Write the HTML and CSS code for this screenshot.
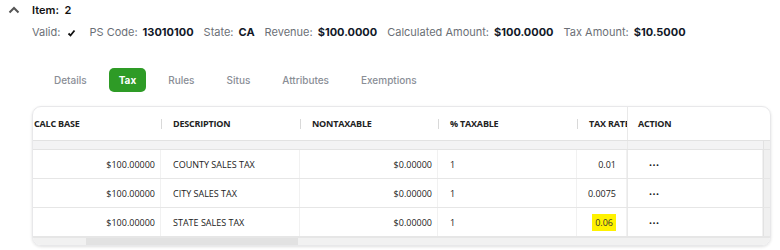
FILE: index.html
```html
<!DOCTYPE html>
<html lang="en">
    <head>
        <meta charset="UTF-8">
        <title>Item 2 - Tax</title>
        <link rel="stylesheet" href="styles.css">
    </head>
    <body>
        <div class="item">
            <div class="item-head">
                <svg class="chevron" width="12" height="8" viewBox="0 0 12 8">
                    <path d="M1.5 6.5 L6 2 L10.5 6.5" fill="none" stroke="#555" stroke-width="2"/>
                </svg>
                <span class="item-title">Item:&nbsp; 2</span>
            </div>

            <div class="summary">
                <span class="label">Valid:</span>
                <svg class="check" width="9" height="8" viewBox="0 0 9 8">
                    <path d="M1.5 4.5 L3.5 6.5 L7.5 1.5" fill="none" stroke="#111" stroke-width="1.8"/>
                </svg>
                <span class="label">PS Code:</span><span class="value">13010100</span>
                <span class="label">State:</span><span class="value">CA</span>
                <span class="label">Revenue:</span><span class="value">$100.0000</span>
                <span class="label">Calculated Amount:</span><span class="value">$100.0000</span>
                <span class="label">Tax Amount:</span><span class="value">$10.5000</span>
            </div>

            <div class="tabs">
                <a class="tab">Details</a>
                <a class="tab active">Tax</a>
                <a class="tab">Rules</a>
                <a class="tab">Situs</a>
                <a class="tab">Attributes</a>
                <a class="tab">Exemptions</a>
            </div>

            <div class="grid">
                <div class="row head">
                    <div class="cell">CALC BASE</div>
                    <div class="cell sep">DESCRIPTION</div>
                    <div class="cell sep">NONTAXABLE</div>
                    <div class="cell sep">% TAXABLE</div>
                    <div class="cell sep clip">TAX RATE</div>
                    <div class="cell pinned">ACTION</div>
                    <div class="cell"></div>
                </div>
                <div class="row band">
                    <div class="cell"></div>
                    <div class="cell"></div>
                    <div class="cell"></div>
                    <div class="cell"></div>
                    <div class="cell"></div>
                    <div class="cell pinned"></div>
                    <div class="cell track top"></div>
                </div>
                <div class="row">
                    <div class="cell num">$100.00000</div>
                    <div class="cell">COUNTY SALES TAX</div>
                    <div class="cell num">$0.00000</div>
                    <div class="cell">1</div>
                    <div class="cell num rate">0.01</div>
                    <div class="cell pinned dots">&bull;&bull;&bull;</div>
                    <div class="cell track"></div>
                </div>
                <div class="row">
                    <div class="cell num">$100.00000</div>
                    <div class="cell">CITY SALES TAX</div>
                    <div class="cell num">$0.00000</div>
                    <div class="cell">1</div>
                    <div class="cell num rate">0.0075</div>
                    <div class="cell pinned dots">&bull;&bull;&bull;</div>
                    <div class="cell track"></div>
                </div>
                <div class="row">
                    <div class="cell num">$100.00000</div>
                    <div class="cell">STATE SALES TAX</div>
                    <div class="cell num">$0.00000</div>
                    <div class="cell">1</div>
                    <div class="cell num rate"><mark>0.06</mark></div>
                    <div class="cell pinned dots">&bull;&bull;&bull;</div>
                    <div class="cell track"></div>
                </div>
                <div class="hscroll">
                    <div class="thumb"></div>
                </div>
            </div>
        </div>
    </body>
</html>
```

FILE: styles.css
```css
* {
    margin: 0;
    padding: 0;
    box-sizing: border-box;
}

body {
    background-color: #fff;
    font-family: 'Inter', 'Liberation Sans', sans-serif;
    color: #111827;
    width: 780px;
    height: 250px;
    overflow: hidden;
}

.item {
    padding: 2px 0 0 0;
}

.item-head {
    display: flex;
    align-items: center;
    height: 15px;
}

.chevron {
    margin-left: 8px;
    margin-right: 12px;
}

.item-title {
    font-size: 11px;
    font-weight: 600;
    color: #111;
}

.summary {
    display: flex;
    align-items: center;
    height: 16px;
    margin-top: 7px;
    padding-left: 32px;
    font-size: 11px;
}

.summary .label {
    color: #6b6f76;
    margin-right: 5px;
}

.summary .value {
    font-weight: 700;
    color: #111827;
    margin-right: 10px;
}

.check {
    margin: 1px 13px 0 2px;
}

.tabs {
    display: flex;
    gap: 12px;
    margin-top: 28px;
    padding-left: 44px;
    height: 24px;
}

.tab {
    display: flex;
    align-items: center;
    padding: 0 10px;
    font-size: 10px;
    font-weight: 500;
    color: #8a8e96;
    border-radius: 5px;
}

.tab.active {
    background-color: #2e9b26;
    color: #fff;
    font-weight: 700;
}

.grid {
    margin: 14px 0 0 32px;
    width: 739px;
    height: 140px;
    border: 1px solid #e8e8ea;
    border-radius: 9px;
    overflow: hidden;
    box-shadow: 0 1px 3px rgba(0, 0, 0, 0.12);
    font-family: 'Open Sans', 'Noto Sans', sans-serif;
    font-size: 9px;
    color: #222;
}

.row {
    display: grid;
    grid-template-columns: 128px 139px 138px 139px 50px 136px 1fr;
    height: 29px;
    border-bottom: 1px solid #e6e6e6;
}

.cell {
    display: flex;
    align-items: center;
    padding: 0 12px;
    white-space: nowrap;
    overflow: hidden;
    border-right: 1px solid #f1f1f1;
}

.row.head {
    height: 34px;
    font-weight: 700;
    letter-spacing: -0.2px;
    color: #222;
    border-bottom: 1px solid #e2e2e2;
}

.row.head .cell {
    border-right: none;
    position: relative;
}

.row.head .cell:first-child {
    padding-left: 1px;
}

.row.head .sep::before {
    content: '';
    position: absolute;
    left: 0;
    top: 12px;
    height: 10px;
    width: 1px;
    background-color: #d9d9d9;
}

.row.head .clip {
    padding-right: 0;
    text-overflow: clip;
}

.row.band {
    height: 9px;
    background-color: #f3f3f4;
    border-bottom: 1px solid #e3e3e3;
}

.row.band .cell {
    border-right: none;
}

.num {
    justify-content: flex-end;
    padding-right: 5px;
}

.num.rate {
    padding-right: 10px;
}

.pinned {
    border-left: 1px solid #e9e9e9;
}

.row.head .pinned {
    border-left: 1px solid #e9e9e9;
    padding-left: 10px;
}

.dots {
    padding-left: 21px;
    font-size: 8px;
    letter-spacing: 0.5px;
}

.track {
    background-color: #f0f0f0;
    border-left: 1px solid #e2e2e2;
    border-right: none;
}

mark {
    background-color: #fff200;
    padding: 2px 3px;
    color: #333;
}

.hscroll {
    height: 8px;
    background-color: #f1f1f1;
    border-top: 1px solid #e6e6e6;
    position: relative;
}

.thumb {
    margin-left: 53px;
    width: 212px;
    height: 100%;
    background-color: #e2e2e2;
}
```
